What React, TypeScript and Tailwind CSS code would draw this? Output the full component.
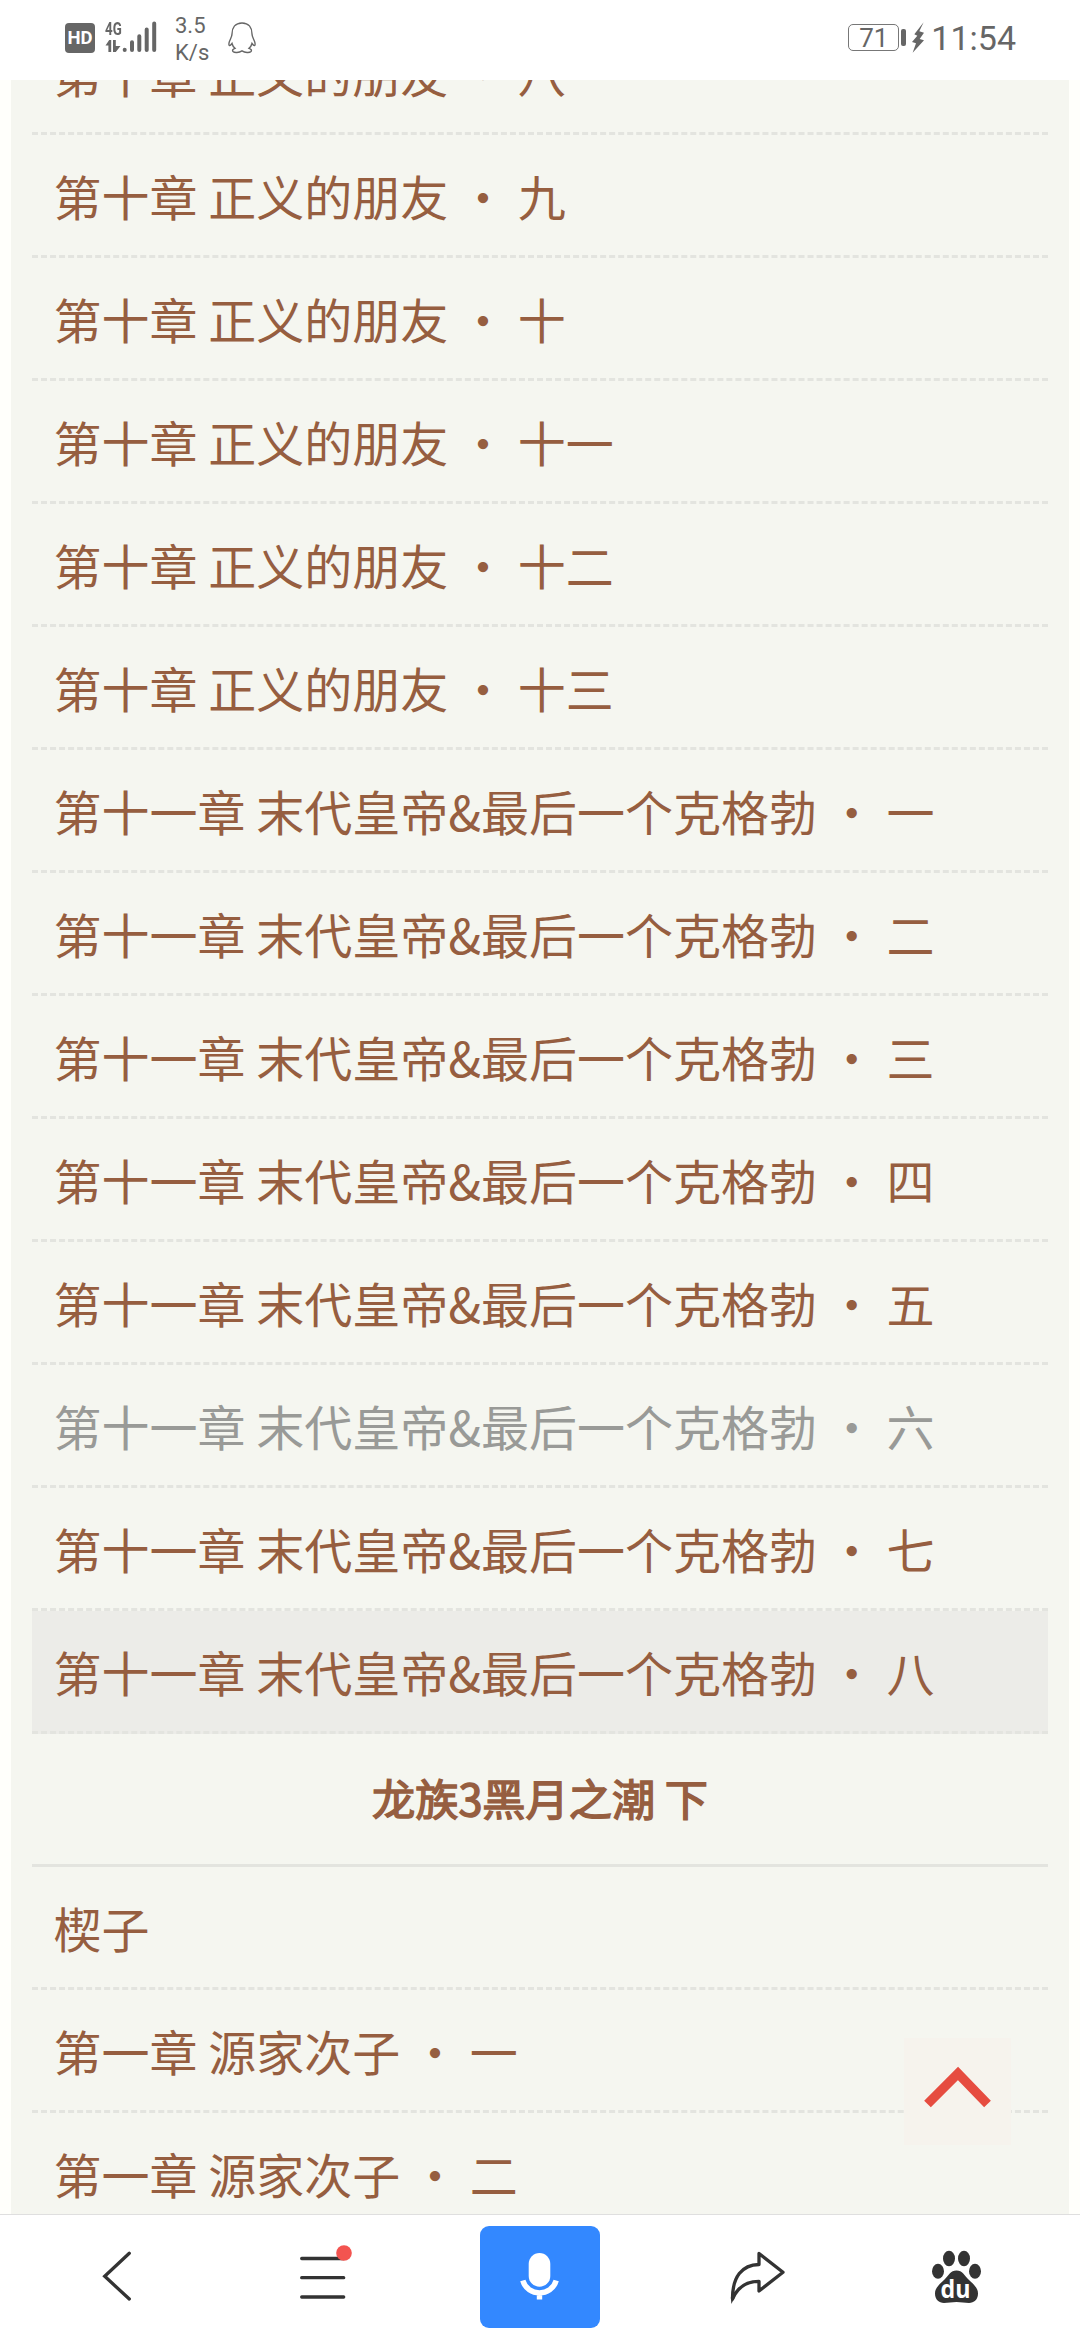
const CJK = "font-['Noto_Sans_CJK_SC',sans-serif]";

type Chapter = { title: string; state?: "visited" | "active" };

const volumeTwo: Chapter[] = [
  { title: "第十章 正义的朋友 ・ 八" },
  { title: "第十章 正义的朋友 ・ 九" },
  { title: "第十章 正义的朋友 ・ 十" },
  { title: "第十章 正义的朋友 ・ 十一" },
  { title: "第十章 正义的朋友 ・ 十二" },
  { title: "第十章 正义的朋友 ・ 十三" },
  { title: "第十一章 末代皇帝&最后一个克格勃 ・ 一" },
  { title: "第十一章 末代皇帝&最后一个克格勃 ・ 二" },
  { title: "第十一章 末代皇帝&最后一个克格勃 ・ 三" },
  { title: "第十一章 末代皇帝&最后一个克格勃 ・ 四" },
  { title: "第十一章 末代皇帝&最后一个克格勃 ・ 五" },
  { title: "第十一章 末代皇帝&最后一个克格勃 ・ 六", state: "visited" },
  { title: "第十一章 末代皇帝&最后一个克格勃 ・ 七" },
  { title: "第十一章 末代皇帝&最后一个克格勃 ・ 八", state: "active" },
];

const volumeThree: Chapter[] = [
  { title: "楔子" },
  { title: "第一章 源家次子 ・ 一" },
  { title: "第一章 源家次子 ・ 二" },
];

function Row({ title, state }: Chapter) {
  const color = state === "visited" ? "text-[#999a97]" : "text-[#965e40]";
  const bg = state === "active" ? "bg-[#ecece8]" : "";
  return (
    <li
      className={`flex h-[123px] shrink-0 items-center whitespace-pre border-b-[3px] border-dashed border-[#e3e4df] pl-[21.500px] text-[48px] leading-[72px] ${color} ${bg}`}
    >
      {title}
    </li>
  );
}

function SignalIcon() {
  return (
    <div className="ml-[10px] flex h-[32px] w-[52px] items-end">
      <div className="flex w-[17px] flex-col">
        <span className="block h-[15px] origin-left scale-x-[0.74] text-[18px] font-bold leading-[15px]">4G</span>
        <svg width="17" height="13" viewBox="0 0 17 13" className="mt-[4px]">
          <path d="M4.200 0H6.200V12H3.400V5.500H0.500ZM8 0H10.800V6L15.500 6L10.800 12H8Z" fill="#666" />
        </svg>
      </div>
      <svg width="35" height="32" viewBox="122 21 35 32">
        <path d="M124.700 49.700v.3M132 42.300v7.700M139.300 36.300v13.700M146.700 29.500v20.500M154.200 23.500v26.500" stroke="#666" strokeWidth="4" strokeLinecap="round" />
      </svg>
    </div>
  );
}

function PenguinIcon() {
  return (
    <svg className="ml-[18px] mt-[10px]" width="30" height="34" viewBox="227 22 30 34">
      <path
        d="M242 23c-7 0-10 5-10 11 0 2-.5 3-1.500 5-1.500 3-2 5.500-1.200 6.500.8.500 2-1 2.700-2 .5 2 1.500 3.500 3 4.800-2 .7-3 2-2 3.200 1.500 1.500 6 1.200 9-.6 3 1.800 7.500 2.100 9 .6 1-1.200 0-2.500-2-3.200 1.500-1.300 2.500-2.800 3-4.800.7 1 1.900 2.500 2.700 2 .8-1 .3-3.500-1.200-6.500-1-2-1.500-3-1.500-5 0-6-3-11-10-11z"
        fill="none"
        stroke="#666"
        strokeWidth="1.400"
      />
    </svg>
  );
}

function StatusBar() {
  return (
    <header className="flex h-20 shrink-0 items-start justify-between bg-white pl-[65px] pr-[64px] pt-3 font-[Roboto,sans-serif] text-[#666]">
      <div className="flex items-start">
        <div className="mt-[11px] flex h-[30px] w-[30px] items-center justify-center rounded-[4px] bg-[#666]">
          <span className="text-[18.500px] font-bold leading-[22px] text-white">HD</span>
        </div>
        <div className="mt-[9px]">
          <SignalIcon />
        </div>
        <div className="ml-[18px] flex w-[34px] flex-col text-[22px] leading-[27px]">
          <span>3.5</span>
          <span>K/s</span>
        </div>
        <PenguinIcon />
      </div>
      <div className="flex items-start">
        <div className="mt-[12px] flex h-[27px] w-[51px] items-center justify-center rounded-[5px] border-[1.500px] border-[#777]">
          <span className="text-[26px] leading-[26px]">71</span>
        </div>
        <div className="ml-[2px] mt-[17px] h-[17px] w-[5px] rounded-[2px] bg-[#666]" />
        <svg className="ml-[5px] mt-[9px]" width="14" height="34" viewBox="390 63 42 102">
          <path d="M428 67L400 103L409 107L393 126L405 130L395 158L429 121L416 117L429 98L415 94Z" fill="#666" />
        </svg>
        <span className="ml-[6px] mt-[6px] block text-[34px] leading-[40px]">11:54</span>
      </div>
    </header>
  );
}

function BottomBar() {
  return (
    <nav className="flex h-[126px] shrink-0 border-t border-[#dfdfdf] bg-white">
      <button className="w-[216px]">
        <svg width="216" height="125" viewBox="0 2215 216 125">
          <path d="M129.300 2253.300L104.700 2276.300L129.300 2299" fill="none" stroke="#333" strokeWidth="3.300" strokeLinecap="round" />
        </svg>
      </button>
      <button className="w-[216px]">
        <svg width="216" height="125" viewBox="216 2215 216 125">
          <path d="M301.700 2258.500h42M301.700 2277.700h42M301.700 2297h42" stroke="#333" strokeWidth="3.300" strokeLinecap="round" />
          <circle cx="344" cy="2253" r="7.800" fill="#f35450" />
        </svg>
      </button>
      <div className="flex w-[216px] justify-center pt-[11px]">
        <button className="h-[102px] w-[120px] rounded-[9px] bg-[#3388ff]">
          <svg width="120" height="102" viewBox="479 2226 120 102">
            <rect x="527.700" y="2253" width="21.600" height="33.700" rx="10.800" fill="#fff" />
            <path d="M521.800 2280.500C526.500 2297 550.500 2297 555.200 2280.500M538.500 2293v6.500" fill="none" stroke="#fff" strokeWidth="5.400" />
          </svg>
        </button>
      </div>
      <button className="w-[216px]">
        <svg width="216" height="125" viewBox="648 2215 216 125">
          <path d="M759 2253.500L783 2272.300L759 2291V2281.300C747 2281.300 738 2286 732.500 2299C732.300 2277 742 2264.800 759 2264.500Z" fill="none" stroke="#333" strokeWidth="3.300" strokeLinejoin="round" />
          <path d="M730.900 2297L731.300 2304L735 2297Z" fill="#333" />
        </svg>
      </button>
      <button className="w-[216px]">
        <svg width="216" height="125" viewBox="864 2215 216 125">
          <g fill="#333">
            <ellipse cx="938" cy="2271.300" rx="6" ry="7.500" />
            <ellipse cx="949" cy="2258.500" rx="6" ry="7.800" />
            <ellipse cx="964" cy="2258.500" rx="6" ry="7.800" />
            <ellipse cx="975" cy="2271.300" rx="6" ry="7.500" />
            <path d="M956.500 2270.500c-6 0-8 5-12 9-5 5-9.500 8-9.500 14 0 6 4 9.500 9 9.500 4 0 8-1 12.500-1s8.500 1 12.500 1c5 0 9-3.500 9-9.500 0-6-4.500-9-9.500-14-4-4-6-9-12-9z" />
          </g>
          <text x="955.500" y="2298.300" fontSize="25" fontWeight="700" textAnchor="middle" fill="#fff" fontFamily="Open Sans, sans-serif" textLength="30" lengthAdjust="spacingAndGlyphs">du</text>
        </svg>
      </button>
    </nav>
  );
}

export default function App() {
  return (
    <div className={`relative flex h-[2340px] w-[1080px] flex-col overflow-hidden bg-[#fffffb] ${CJK}`}>
      <StatusBar />
      <main className="ml-[11px] flex h-[2134px] w-[1058px] shrink-0 flex-col overflow-hidden bg-[#f5f6f0] px-[21px]">
        <ul className="-mt-[68px] flex shrink-0 flex-col">
          {volumeTwo.map((c) => <Row key={c.title} {...c} />)}
        </ul>
        <h2 className="flex h-[133px] shrink-0 items-center justify-center border-b-[3px] border-[#e3e4df] pb-[3px] text-[43.2px] font-normal text-[#965e40] [-webkit-text-stroke:1.5px_#965e40]">
          龙族3黑月之潮 下
        </h2>
        <ul className="flex shrink-0 flex-col">
          {volumeThree.map((c) => <Row key={c.title} {...c} />)}
        </ul>
      </main>
      <button className="absolute left-[904px] top-[2038px] h-[107px] w-[107px] bg-[#f6f3ed]">
        <svg className="blur-[0.6px]" width="107" height="107" viewBox="904 2038 107 107">
          <path d="M927.500 2104L958 2073.500L987.500 2104" fill="none" stroke="#e64c40" strokeWidth="9.400" />
        </svg>
      </button>
      <BottomBar />
    </div>
  );
}
